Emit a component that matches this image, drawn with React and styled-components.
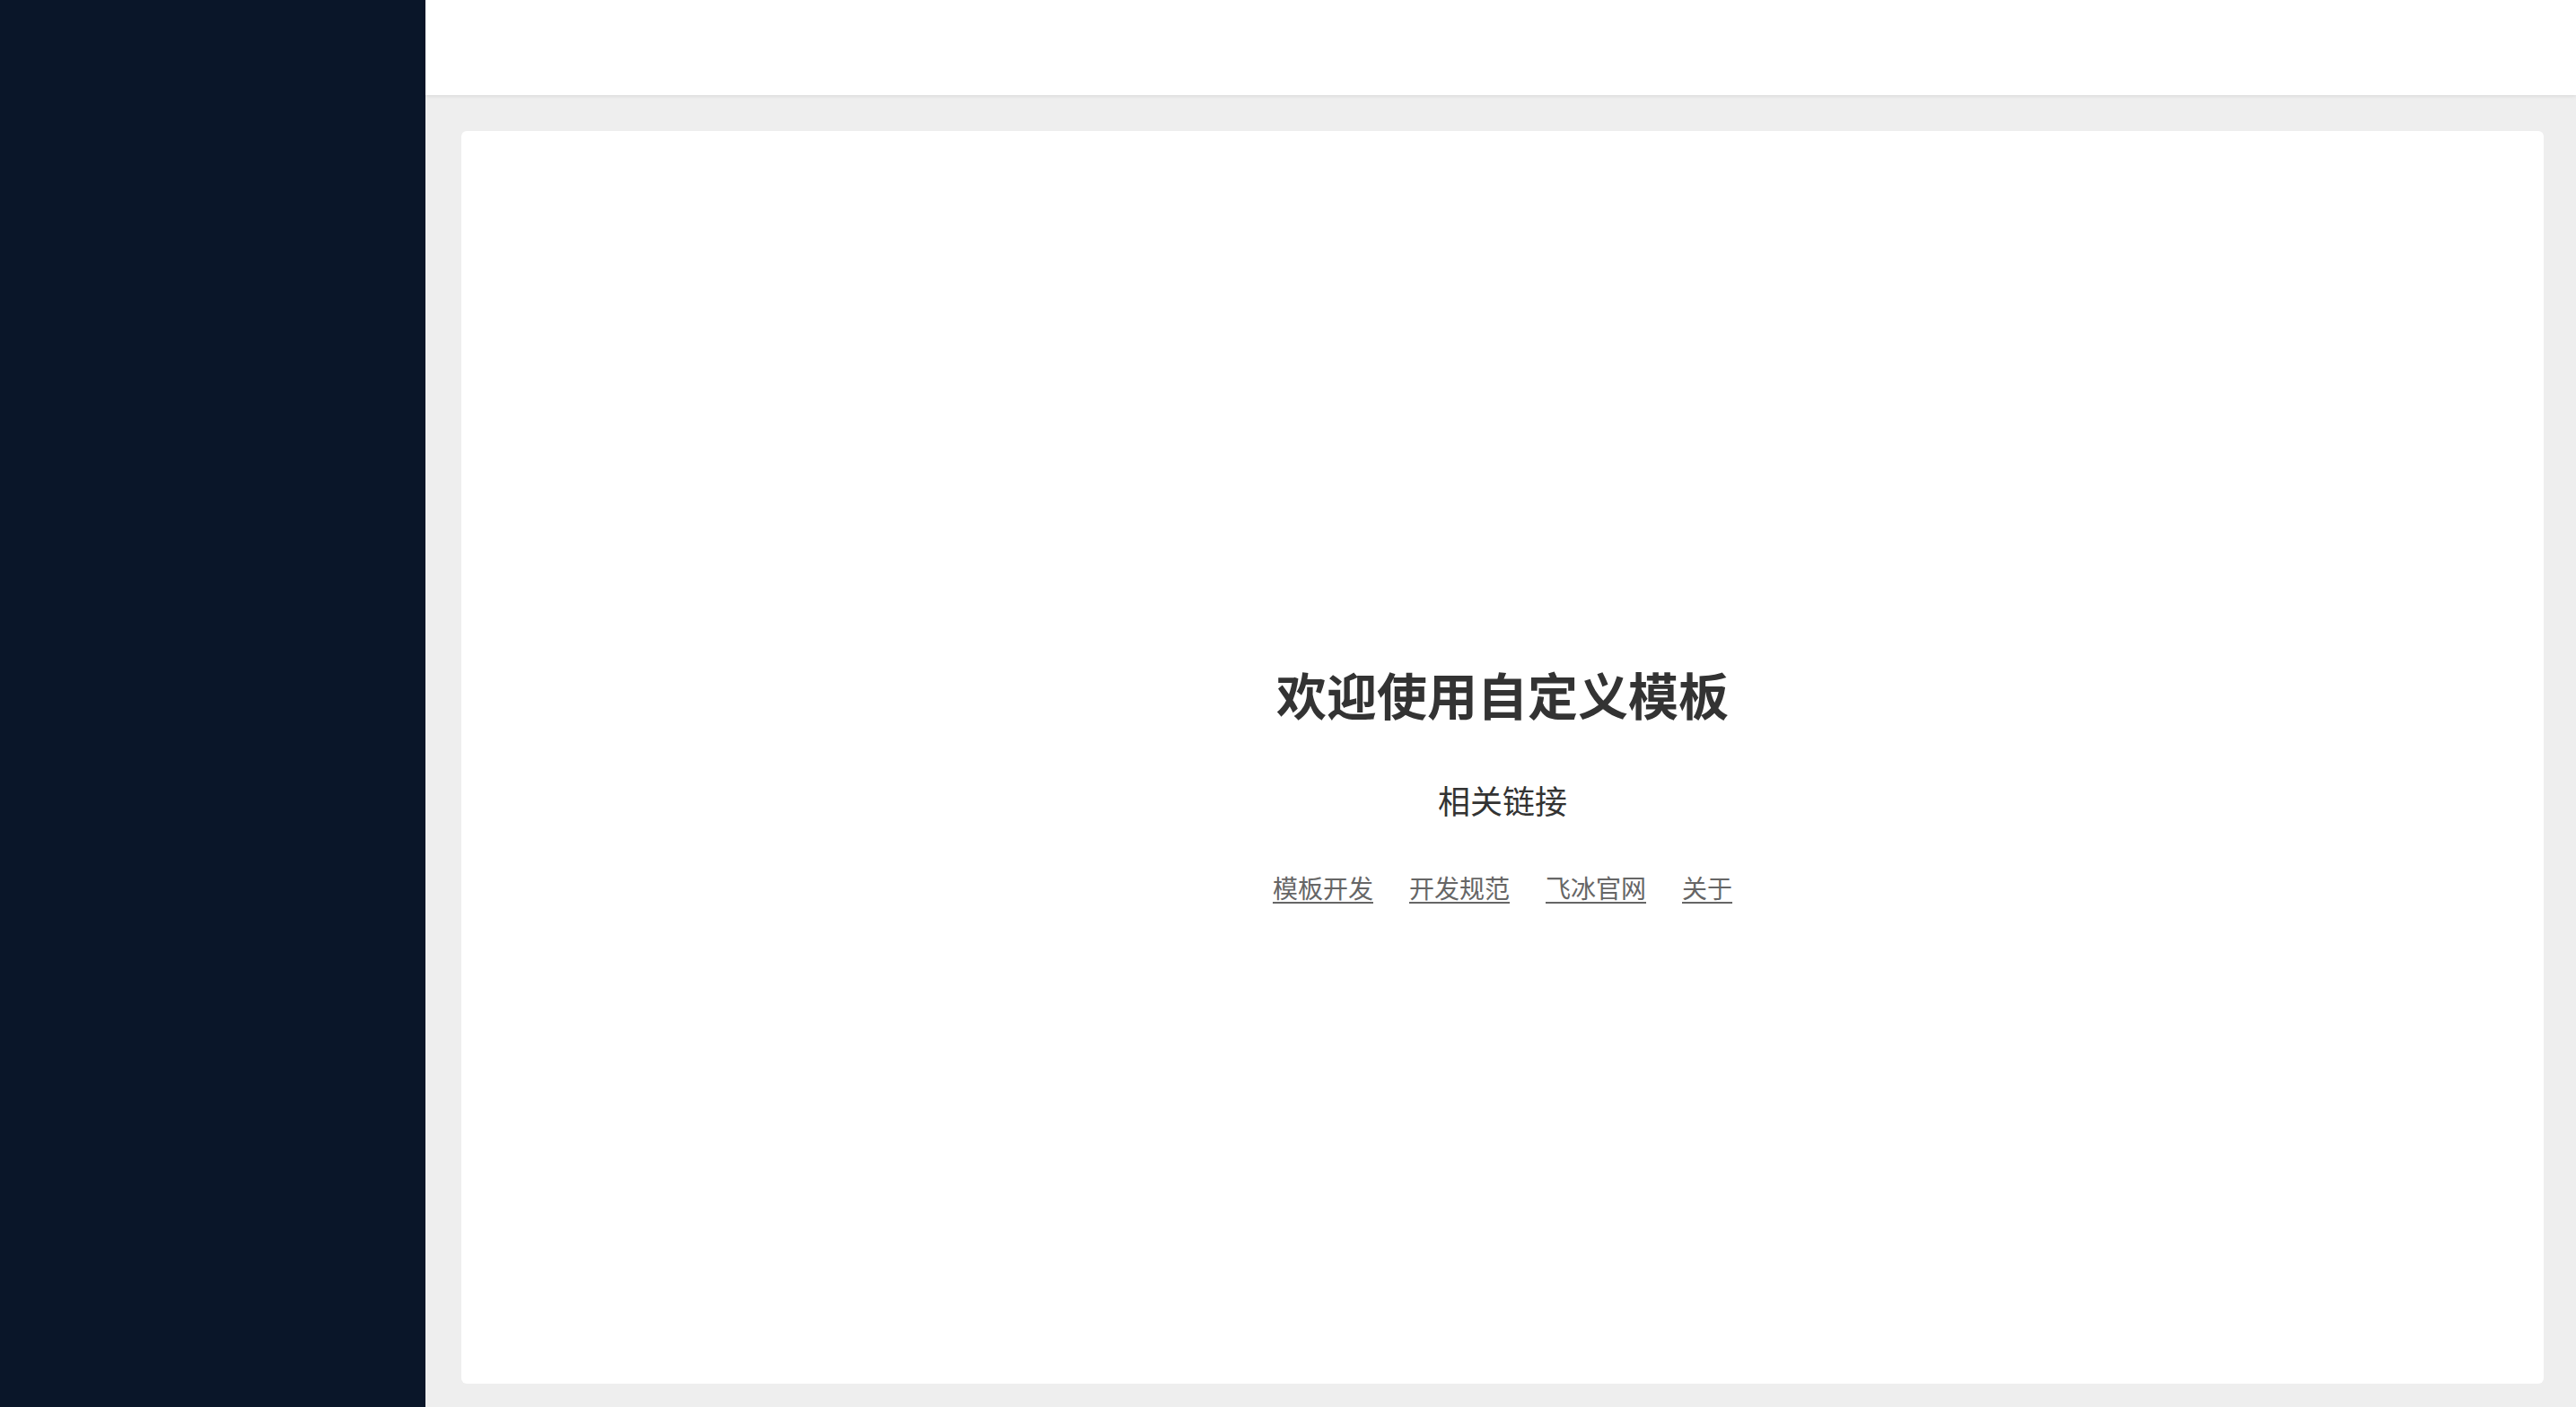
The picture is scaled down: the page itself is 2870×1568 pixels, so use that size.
import React from "react";
import styled, { createGlobalStyle } from "styled-components";

const GlobalStyle = createGlobalStyle`
  html, body {
    margin: 0;
    padding: 0;
    height: 100%;
  }
  body {
    font-family: "Noto Sans CJK SC", "Noto Sans", sans-serif;
    background: #eeeeee;
  }
  #root {
    height: 100%;
  }
`;

const Layout = styled.div`
  display: flex;
  width: 100%;
  height: 100vh;
  overflow: hidden;
`;

const Sidebar = styled.aside`
  flex: 0 0 474px;
  background: #0a1629;
`;

const Main = styled.div`
  flex: 1;
  display: flex;
  flex-direction: column;
  min-width: 0;
  background: #eeeeee;
`;

const Header = styled.header`
  flex: 0 0 106px;
  background: #ffffff;
  box-shadow: 0 1px 4px rgba(0, 0, 0, 0.1);
  position: relative;
  z-index: 1;
`;

const Content = styled.main`
  flex: 1;
  display: flex;
  padding: 40px 36px 26px 40px;
  min-height: 0;
`;

const Card = styled.section`
  flex: 1;
  background: #ffffff;
  border-radius: 6px;
  display: flex;
  flex-direction: column;
  align-items: center;
  justify-content: center;
  padding: 58px 0 0 0;
`;

const Title = styled.h1`
  margin: 0;
  font-size: 56px;
  line-height: 66px;
  font-weight: 600;
  color: #333333;
`;

const SubTitle = styled.h2`
  margin: 64px 0 0;
  font-size: 36px;
  line-height: 42px;
  font-weight: 400;
  color: #333333;
`;

const Links = styled.nav`
  display: flex;
  gap: 40px;
  margin-top: 60px;
`;

const LinkItem = styled.a`
  font-size: 28px;
  line-height: 34px;
  color: #666666;
  text-decoration: underline;
  text-underline-offset: 4px;
  cursor: pointer;
`;

const links = ["模板开发", "开发规范", "飞冰官网", "关于"];

export default function App() {
  return (
    <>
      <GlobalStyle />
      <Layout>
        <Sidebar />
        <Main>
          <Header />
          <Content>
            <Card>
              <Title>欢迎使用自定义模板</Title>
              <SubTitle>相关链接</SubTitle>
              <Links>
                {links.map((l) => (
                  <LinkItem key={l}>{l}</LinkItem>
                ))}
              </Links>
            </Card>
          </Content>
        </Main>
      </Layout>
    </>
  );
}
